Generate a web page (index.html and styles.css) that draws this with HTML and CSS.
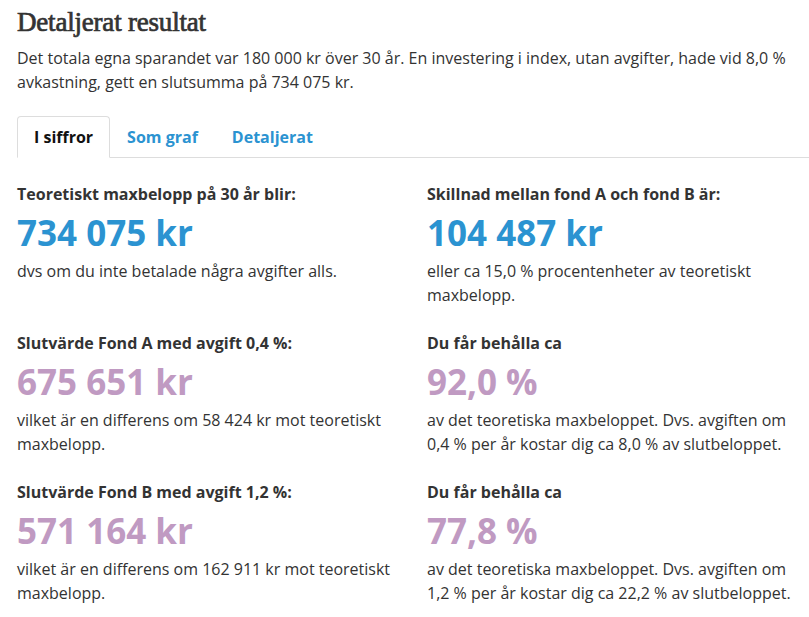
FILE: index.html
```html
<!DOCTYPE html>
<html lang="sv">
<head>
<meta charset="utf-8">
<link rel="stylesheet" href="styles.css">
</head>
<body>
<div class="page">
  <h2 class="title">Detaljerat resultat</h2>
  <p class="intro">Det totala egna sparandet var 180 000 kr över 30 år. En investering i index, utan avgifter, hade vid 8,0 % avkastning, gett en slutsumma på 734 075 kr.</p>
  <div class="tabs">
    <span class="tab active">I siffror</span>
    <span class="tab">Som graf</span>
    <span class="tab">Detaljerat</span>
  </div>
  <div class="grid">
    <div class="cell">
      <div class="label">Teoretiskt maxbelopp på 30 år blir:</div>
      <div class="big blue">734 075 kr</div>
      <div class="desc">dvs om du inte betalade några avgifter alls.</div>
    </div>
    <div class="cell">
      <div class="label">Skillnad mellan fond A och fond B är:</div>
      <div class="big blue">104 487 kr</div>
      <div class="desc">eller ca 15,0 % procentenheter av teoretiskt maxbelopp.</div>
    </div>
    <div class="cell">
      <div class="label">Slutvärde Fond A med avgift 0,4 %:</div>
      <div class="big purple">675 651 kr</div>
      <div class="desc">vilket är en differens om 58 424 kr mot teoretiskt maxbelopp.</div>
    </div>
    <div class="cell">
      <div class="label">Du får behålla ca</div>
      <div class="big purple">92,0 %</div>
      <div class="desc">av det teoretiska maxbeloppet. Dvs. avgiften om 0,4 % per år kostar dig ca 8,0 % av slutbeloppet.</div>
    </div>
    <div class="cell">
      <div class="label">Slutvärde Fond B med avgift 1,2 %:</div>
      <div class="big purple">571 164 kr</div>
      <div class="desc">vilket är en differens om 162 911 kr mot teoretiskt maxbelopp.</div>
    </div>
    <div class="cell">
      <div class="label">Du får behålla ca</div>
      <div class="big purple">77,8 %</div>
      <div class="desc">av det teoretiska maxbeloppet. Dvs. avgiften om 1,2 % per år kostar dig ca 22,2 % av slutbeloppet.</div>
    </div>
  </div>
</div>
</body>
</html>
```

FILE: styles.css
```css
html, body {
  margin: 0;
  padding: 0;
  background: #fff;
}
.page {
  padding: 0 0 0 17px;
  font-family: "Open Sans", "Noto Sans", sans-serif;
  color: #333;
  font-size: 16px;
  line-height: 24px;
}
.title {
  margin: 0;
  padding-top: 5px;
  font-family: "Liberation Serif", serif;
  font-weight: normal;
  font-size: 27px;
  line-height: 34px;
  letter-spacing: -0.2px;
  -webkit-text-stroke: 0.7px #333;
  color: #333;
}
.intro {
  margin: 7px 0 0 0;
  padding-right: 10px;
}
.tabs {
  display: flex;
  margin-top: 22px;
  border-bottom: 1px solid #ddd;
}
.tab {
  padding: 8px 16px 8px 16px;
  font-weight: bold;
  color: #2b93d1;
  border: 1px solid transparent;
  border-bottom: none;
  border-radius: 4px 4px 0 0;
  margin-bottom: -1px;
  line-height: 24px;
}
.tab.active {
  color: #111;
  background: #fff;
  border-color: #ddd;
  border-bottom: 1px solid #fff;
}
.grid {
  display: grid;
  grid-template-columns: 410px 1fr;
  row-gap: 24px;
  padding-top: 24px;
  padding-right: 10px;
}
.label {
  font-weight: bold;
  color: #333;
}
.big {
  font-weight: bold;
  font-size: 35px;
  line-height: 50px;
  margin-top: 2px;
}
.blue { color: #2b93d1; }
.purple { color: #c09ac2; }
.desc {
  margin-top: 1px;
}
```
